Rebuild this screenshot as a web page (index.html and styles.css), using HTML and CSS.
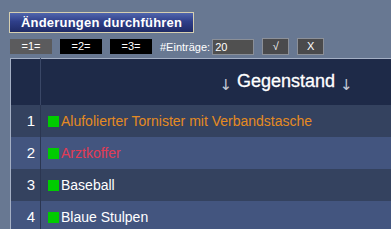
FILE: index.html
```html
<!DOCTYPE html>
<html>

<head>
	<meta charset="utf-8">
	<title>Gegenstände</title>
	<link rel="stylesheet" href="styles.css">
</head>

<body>
	<div class="page">
		<button class="apply">Änderungen durchführen</button>

		<div class="toolbar">
			<span class="tab active">=1=</span>
			<span class="tab">=2=</span>
			<span class="tab">=3=</span>
			<label class="count">#Einträge:</label>
			<input class="count-input" type="text" value="20">
			<span class="small-btn">√</span>
			<span class="small-btn">X</span>
		</div>

		<table class="items">
			<tr class="head">
				<th class="num"></th>
				<th class="name"><span class="arrow">↓</span> Gegenstand <span class="arrow">↓</span></th>
			</tr>
			<tr class="odd">
				<td class="num">1</td>
				<td class="name"><span class="mark"></span><span class="orange">Alufolierter Tornister mit Verbandstasche</span></td>
			</tr>
			<tr class="even">
				<td class="num">2</td>
				<td class="name"><span class="mark"></span><span class="red">Arztkoffer</span></td>
			</tr>
			<tr class="odd">
				<td class="num">3</td>
				<td class="name"><span class="mark"></span>Baseball</td>
			</tr>
			<tr class="even">
				<td class="num">4</td>
				<td class="name"><span class="mark"></span>Blaue Stulpen</td>
			</tr>
		</table>
	</div>
</body>

</html>
```

FILE: styles.css
```css
html,
body {
	margin: 0;
	padding: 0;
	background: #687892;
	overflow: hidden;
	font-family: "Liberation Sans", Arial, sans-serif;
	color: #fff;
}

.page {
	padding: 12px 0 0 9px;
	width: 600px;
}

.apply {
	display: block;
	width: 185px;
	height: 21px;
	margin: 0;
	padding: 0 0 0 11px;
	text-align: left;
	border: 1px solid #d6cfb0;
	background: linear-gradient(#5166ad, #2f3f8a 45%, #1f2b66);
	color: #fff;
	font-family: "Liberation Sans", Arial, sans-serif;
	font-size: 13px;
	font-weight: bold;
	letter-spacing: 0.2px;
}

.toolbar {
	display: flex;
	align-items: center;
	height: 17px;
	margin-top: 5px;
	margin-left: 1px;
	font-size: 11px;
}

.tab {
	width: 42px;
	height: 15px;
	line-height: 15px;
	margin-right: 8px;
	text-align: center;
	background: #000;
}

.tab.active {
	background: #5b5b5d;
}

.count {
	margin-right: 2px;
}

.count-input {
	box-sizing: border-box;
	width: 42px;
	height: 16px;
	margin: 0 8px 0 0;
	padding: 0 2px;
	border: 1px solid #8a8f98;
	background: #505050;
	color: #fff;
	font-family: "Liberation Sans", Arial, sans-serif;
	font-size: 11px;
}

.small-btn {
	box-sizing: border-box;
	width: 27px;
	height: 17px;
	line-height: 15px;
	margin-right: 8px;
	text-align: center;
	border: 1px solid #8c9098;
	background: #4a4a4c;
}

.items {
	margin: 3px 0 0 1px;
	width: 514px;
	border-collapse: collapse;
	border-top: 1px solid #a4afc4;
	border-left: 1px solid #a4afc4;
}

.items td,
.items th {
	padding: 0;
}

.items .num {
	width: 24px;
	padding-right: 5px;
	text-align: right;
	font-size: 15px;
	border-right: 1px solid #2b3651;
}

.head {
	height: 46px;
	background: #1e2a48;
}

.head th {
	font-size: 18px;
	font-weight: normal;
	-webkit-text-stroke: 0.3px #fff;
}

.head .num {
	border-right-color: #3a4766;
}

.arrow {
	color: #c4cad8;
	-webkit-text-stroke: 0;
	font-family: "DejaVu Sans", sans-serif;
	font-size: 15px;
	position: relative;
	top: 3px;
}

.odd,
.even {
	height: 32px;
}

.odd {
	background: #34425f;
}

.even {
	background: #43557f;
}

.name {
	padding-left: 7px !important;
	font-size: 14px;
}

.mark {
	display: inline-block;
	width: 11px;
	height: 11px;
	margin-right: 2px;
	background: #00cc00;
	vertical-align: -1px;
}

.orange {
	color: #e58b22;
}

.red {
	color: #e23b55;
}
```
